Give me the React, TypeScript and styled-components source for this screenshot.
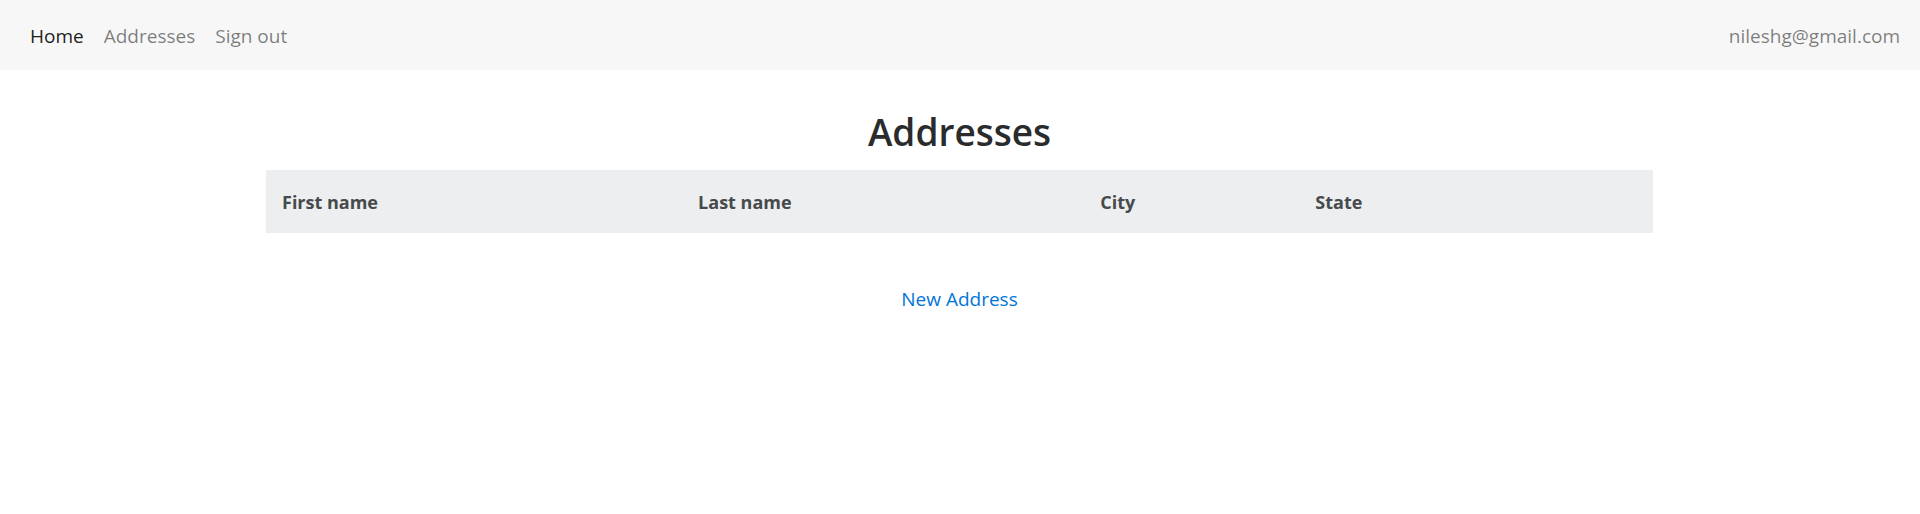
import React from "react";
import styled, { createGlobalStyle } from "styled-components";

const GlobalStyle = createGlobalStyle`
  *, *::before, *::after { box-sizing: border-box; }
  body {
    margin: 0;
    background: #fff;
    color: #292b2c;
    font-family: "Segoe UI", "Open Sans", "Noto Sans", sans-serif;
    font-size: 19px;
    line-height: 30px;
  }
`;

const Navbar = styled.nav`
  display: flex;
  align-items: center;
  justify-content: space-between;
  padding: 21px 20px 19px;
  background: #f7f7f7;
`;

const NavList = styled.ul`
  display: flex;
  gap: 20px;
  margin: 0;
  padding: 0 0 0 10px;
  list-style: none;
`;

const NavLink = styled.a<{ $active?: boolean }>`
  color: ${({ $active }) => ($active ? "rgba(0, 0, 0, 0.9)" : "rgba(0, 0, 0, 0.5)")};
  text-decoration: none;
`;

const UserEmail = styled.span`
  color: rgba(0, 0, 0, 0.5);
`;

const Container = styled.main`
  max-width: 1426px;
  margin: 40px auto 0;
  padding: 0 20px 0 19px;
  text-align: center;
`;

const Title = styled.h1`
  margin: 0 0 16px;
  font-size: 37px;
  font-weight: 600;
  line-height: 44px;
`;

const Table = styled.table`
  width: 100%;
  margin-bottom: 51px;
  border-collapse: collapse;
  table-layout: fixed;
  text-align: left;
`;

const HeaderCell = styled.th<{ $width?: string }>`
  width: ${({ $width }) => $width ?? "auto"};
  padding: 17px 16px 16px;
  background: #eceeef;
  color: #464a4c;
  font-size: 18px;
  font-weight: 700;
`;

const ActionLink = styled.a`
  color: #0275d8;
  text-decoration: none;
`;

const columns = [
  { label: "First name", width: "30%" },
  { label: "Last name", width: "29%" },
  { label: "City", width: "15.5%" },
  { label: "State", width: undefined },
];

export default function App() {
  return (
    <>
      <GlobalStyle />
      <Navbar>
        <NavList>
          <li><NavLink href="#home" $active aria-current="page">Home</NavLink></li>
          <li><NavLink href="#addresses">Addresses</NavLink></li>
          <li><NavLink href="#sign-out">Sign out</NavLink></li>
        </NavList>
        <UserEmail>nileshg@gmail.com</UserEmail>
      </Navbar>
      <Container>
        <Title>Addresses</Title>
        <Table>
          <thead>
            <tr>
              {columns.map(({ label, width }) => (
                <HeaderCell key={label} scope="col" $width={width}>{label}</HeaderCell>
              ))}
            </tr>
          </thead>
          <tbody />
        </Table>
        <ActionLink href="#new-address">New Address</ActionLink>
      </Container>
    </>
  );
}
